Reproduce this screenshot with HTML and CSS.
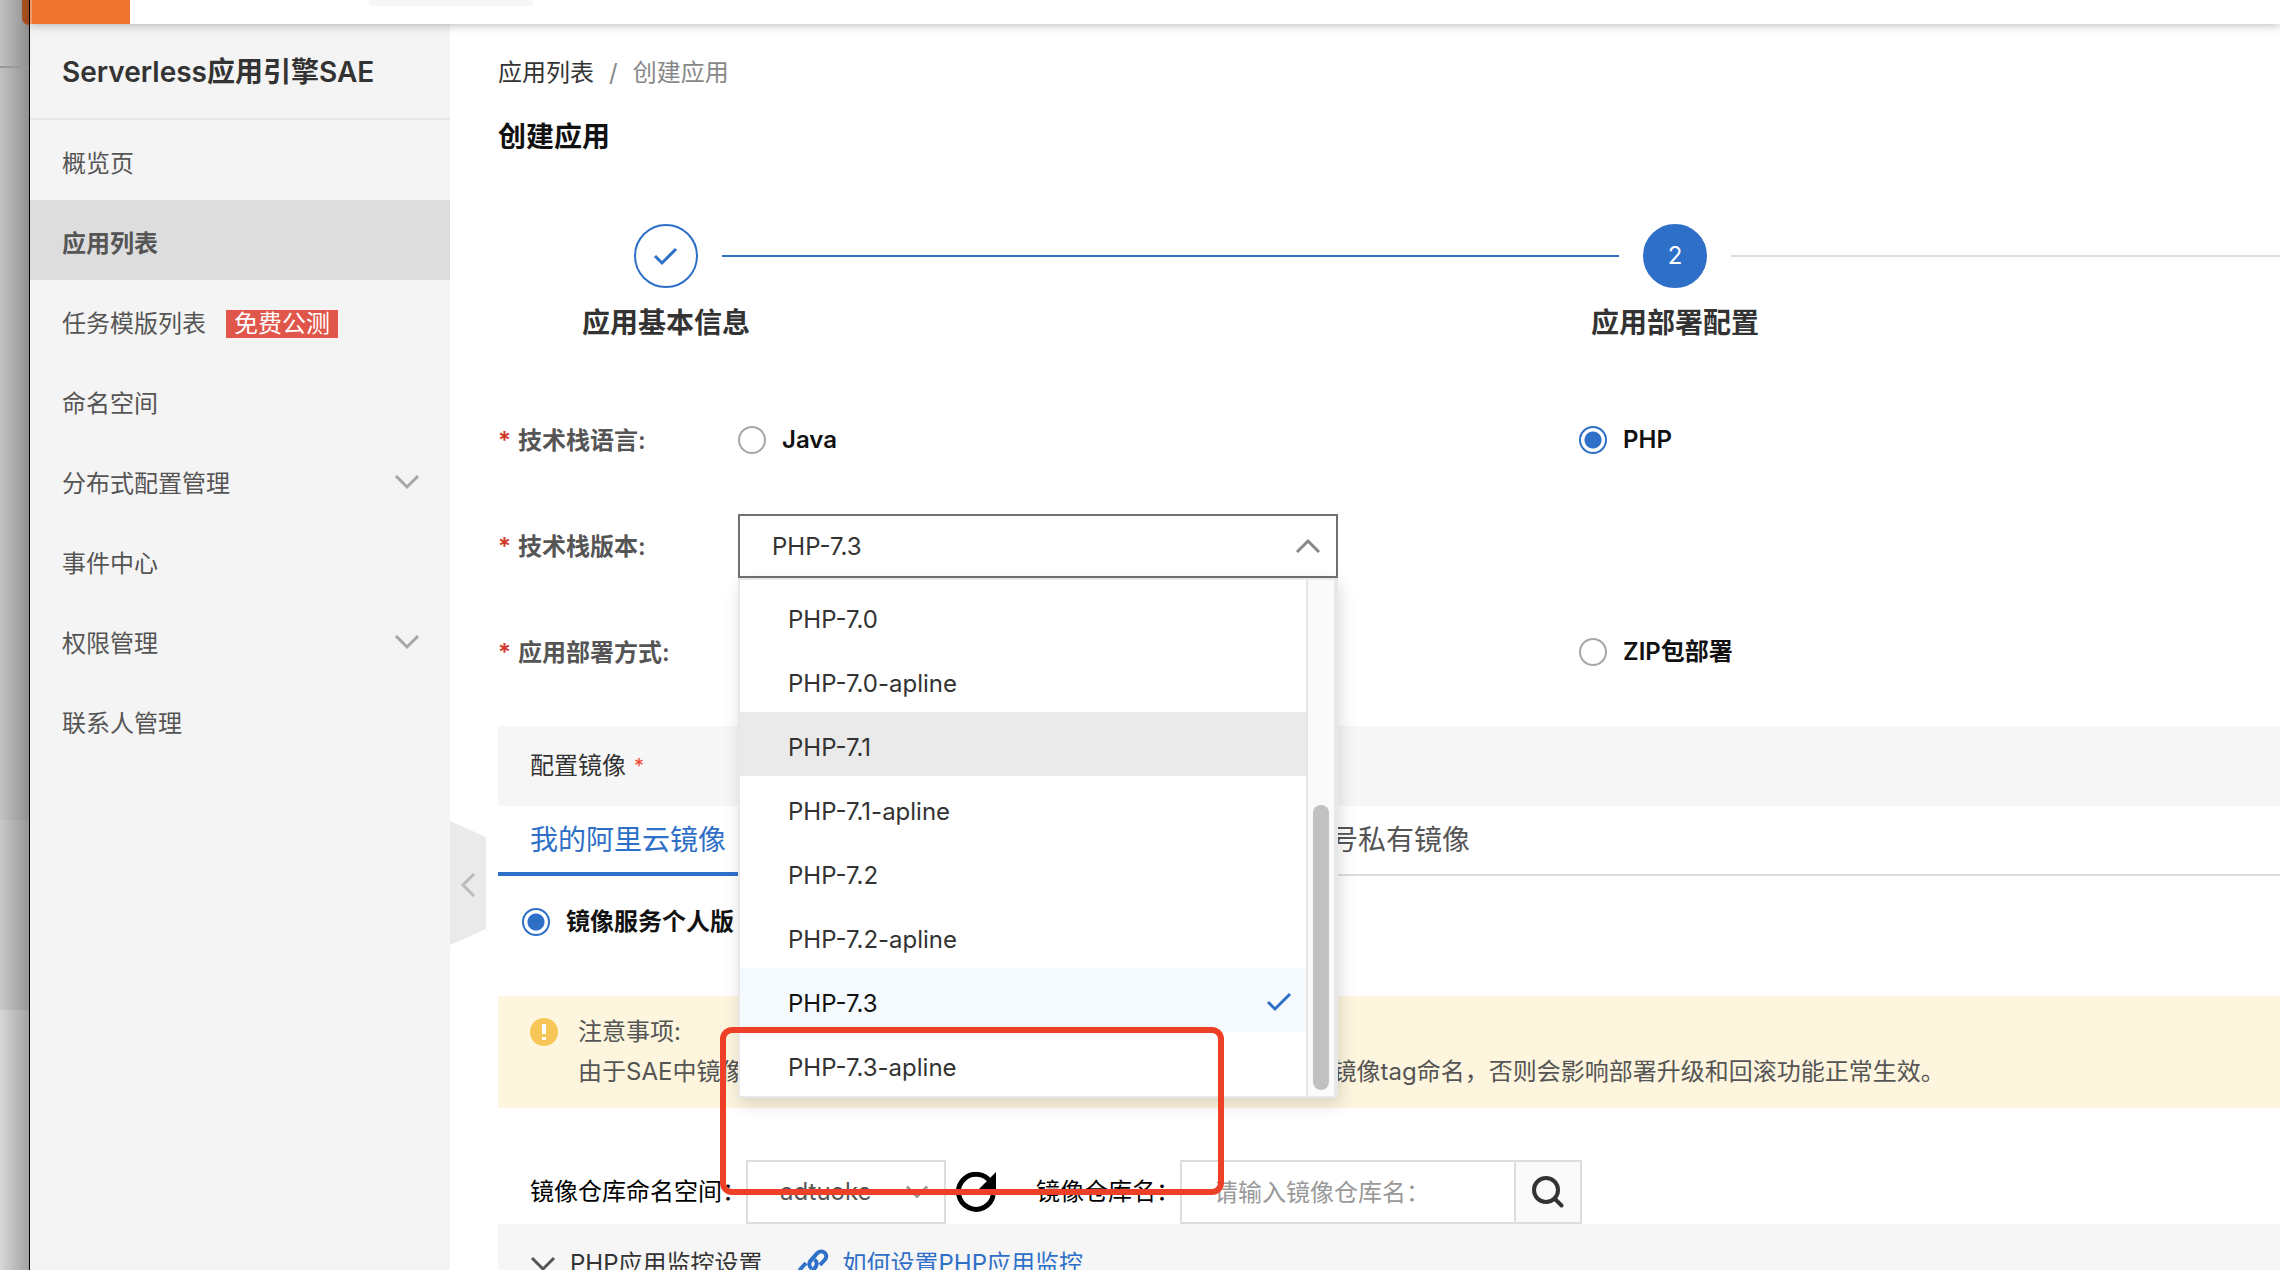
FILE: index.html
```html
<!DOCTYPE html>
<html lang="zh-CN">
<head>
<meta charset="utf-8">
<title>创建应用</title>
<link rel="stylesheet" href="styles.css">
</head>
<body>
<div class="desktop">
  <div class="backdrop">
    <div class="backdrop-top"><span class="backdrop-logo"></span></div>
    <div class="backdrop-mid"></div>
    <div class="backdrop-low"></div>
    <div class="backdrop-end"></div>
  </div>
  <div class="window">
    <header class="topbar">
      <span class="menu-logo"></span>
      <span class="top-pill"></span>
    </header>
    <div class="body">
      <nav class="sidebar">
        <h2 class="product">Serverless应用引擎SAE</h2>
        <ul class="menu">
          <li><a class="menu-item" href="#">概览页</a></li>
          <li><a class="menu-item current" href="#">应用列表</a></li>
          <li><a class="menu-item" href="#">任务模版列表<span class="tag">免费公测</span></a></li>
          <li><a class="menu-item" href="#">命名空间</a></li>
          <li><a class="menu-item" href="#">分布式配置管理<svg class="fold" viewBox="0 0 26 16"><path d="M2 2l11 11L24 2"/></svg></a></li>
          <li><a class="menu-item" href="#">事件中心</a></li>
          <li><a class="menu-item" href="#">权限管理<svg class="fold" viewBox="0 0 26 16"><path d="M2 2l11 11L24 2"/></svg></a></li>
          <li><a class="menu-item" href="#">联系人管理</a></li>
        </ul>
      </nav>
      <main class="main">
        <button class="collapse" type="button" aria-label="收起"><svg width="16" height="26" viewBox="0 0 16 26"><path d="M14 2L3 13l11 11"/></svg></button>
        <div class="breadcrumb"><a href="#">应用列表</a><span class="slash">/</span><span>创建应用</span></div>
        <h1 class="title">创建应用</h1>

        <div class="steps">
          <span class="dot done"><svg width="26" height="20" viewBox="0 0 26 20"><path d="M2 10l7 7L23 3"/></svg></span>
          <span class="line active"></span>
          <span class="dot now">2</span>
          <span class="line"></span>
          <span class="step-label first">应用基本信息</span>
          <span class="step-label second">应用部署配置</span>
        </div>

        <form class="form">
          <div class="row">
            <span class="label"><b class="star">*</b>技术栈语言:</span>
            <div class="choices">
              <label class="choice"><input type="radio" name="lang">Java</label>
              <label class="choice"><input type="radio" name="lang" checked>PHP</label>
            </div>
          </div>
          <div class="row">
            <label class="label" for="version"><b class="star">*</b>技术栈版本:</label>
            <div class="version">
              <select class="version-select" id="version"><option>PHP-7.3</option></select>
              <svg class="caret" viewBox="0 0 26 16"><path d="M2 14L13 3l11 11"/></svg>
              <div class="dropdown">
                <ul class="options" role="listbox">
                  <li class="option" role="option">PHP-7.0</li>
                  <li class="option" role="option">PHP-7.0-apline</li>
                  <li class="option hover" role="option">PHP-7.1</li>
                  <li class="option" role="option">PHP-7.1-apline</li>
                  <li class="option" role="option">PHP-7.2</li>
                  <li class="option" role="option">PHP-7.2-apline</li>
                  <li class="option selected" role="option" aria-selected="true">PHP-7.3<svg width="26" height="20" viewBox="0 0 26 20"><path d="M2 10l7 7L24 2"/></svg></li>
                  <li class="option" role="option">PHP-7.3-apline</li>
                </ul>
                <div class="track"><span class="thumb"></span></div>
              </div>
            </div>
          </div>
          <div class="row">
            <span class="label"><b class="star">*</b>应用部署方式:</span>
            <div class="choices">
              <label class="choice"><input type="radio" name="deploy" checked>镜像</label>
              <label class="choice"><input type="radio" name="deploy">ZIP包部署</label>
            </div>
          </div>
        </form>

        <section class="image-config">
          <h3 class="section-head">配置镜像<span class="mini-star">*</span></h3>
          <div class="tabs">
            <button class="tab on" type="button">我的阿里云镜像</button>
            <button class="tab other" type="button">其他阿里云账号私有镜像</button>
          </div>
          <div class="edition">
            <label class="choice"><input type="radio" name="edition" checked>镜像服务个人版</label>
          </div>
          <div class="notice">
            <svg width="28" height="28" viewBox="0 0 28 28"><circle cx="14" cy="14" r="14" fill="#f6c659"/><path d="M12 6h4v10h-4zM12 19h4v3h-4z" fill="#fff"/></svg>
            <div class="notice-text">
              <p>注意事项:</p>
              <p>由于SAE中镜像版本管理依赖镜像仓库中的tag标识，请务必使用不同的镜像tag命名，否则会影响部署升级和回滚功能正常生效。</p>
            </div>
          </div>
          <div class="filter">
            <label for="space">镜像仓库命名空间：</label>
            <div class="space">
              <select class="space-select" id="space"><option>adtuoke</option></select>
              <svg class="space-caret" viewBox="0 0 26 16"><path d="M2 2l11 11L24 2"/></svg>
            </div>
            <button class="refresh" type="button" aria-label="刷新"><svg width="40" height="40" viewBox="0 0 40 40"><path d="M34.500 10A17.500 17.500 0 1 0 37.200 23" fill="none" stroke="#000" stroke-width="5"/><path d="M40 0v18H22z"/></svg></button>
            <label for="repo">镜像仓库名：</label>
            <input class="repo" id="repo" type="text" placeholder="请输入镜像仓库名：">
            <button class="search" type="button" aria-label="搜索"><svg width="34" height="34" viewBox="0 0 34 34"><circle cx="15" cy="15" r="12"/><path d="M23.500 23.500l7 7"/></svg></button>
          </div>
        </section>
        <section class="monitor">
          <svg class="monitor-caret" viewBox="0 0 26 16"><path d="M2 2l11 11L24 2"/></svg>
          <span>PHP应用监控设置</span>
          <a class="help" href="#"><svg width="32" height="32" viewBox="0 0 32 32"><path d="M14.500 20.500c-3-2.500-3-6 0-9l6-6.500c5-4.500 11.500 1.500 7.500 6.500l-5 5.500"/><path d="M17.500 11.500c3 2.500 3 6 0 9l-6 6.500c-5 4.500-11.500-1.500-7.500-6.500l5-5.500"/></svg>如何设置PHP应用监控</a>
        </section>
        <span class="mark"></span>
      </main>
    </div>
  </div>
</div>
</body>
</html>
```
FILE: styles.css
```css
* { box-sizing: border-box; }

body {
  margin: 0;
  height: 100vh;
  overflow: hidden;
  color: #333;
  background: #fff;
  font: 24px/32px Inter, "Noto Sans CJK SC", sans-serif;
}

a { color: inherit; text-decoration: none; }
ul { list-style: none; margin: 0; padding: 0; }
p, h1, h2, h3 { margin: 0; }
button, input, select { font: inherit; color: inherit; margin: 0; }
path, circle { stroke-linecap: butt; }

.desktop { display: flex; min-height: 100vh; }

/* Strip of the window behind, shaded by the front window */
.backdrop {
  flex: none;
  width: 30px;
  display: flex;
  flex-direction: column;
  border-right: 1px solid #000;
}
.backdrop-top { height: 68px; border-bottom: 2px solid #999; background: linear-gradient(90deg, #c2c2c2, #8f8f8f); }
.backdrop-logo { display: block; width: 7px; height: 25px; margin-left: auto; background: #a8501f; border-radius: 0 0 0 7px; }
.backdrop-mid { height: 752px; background: linear-gradient(90deg, #c2c2c2, #929292); }
.backdrop-low { height: 190px; background: linear-gradient(90deg, #c9c9c9, #989898); }
.backdrop-end { flex: 1; background: linear-gradient(90deg, #d8d8d8, #a2a2a2); }

.window { flex: 1; min-width: 0; display: flex; flex-direction: column; }

.topbar {
  position: relative;
  z-index: 2;
  display: flex;
  align-items: flex-start;
  height: 24px;
  background: #fff;
  box-shadow: 0 2px 8px rgba(0, 0, 0, .24);
}
.menu-logo { width: 100px; height: 24px; margin-right: 239px; background: #f07430; border-left: 2px solid #f39a6b; }
.top-pill { width: 164px; height: 6px; background: #f5f6f8; border-radius: 0 0 4px 4px; }

.body { flex: 1; display: flex; }

.sidebar { flex: none; width: 420px; background: #f4f4f4; }
.product { padding: 28px 32px 26px; font-size: 28px; line-height: 40px; font-weight: 600; border-bottom: 2px solid #e9e9e9; }
.menu-item { display: flex; align-items: center; height: 80px; padding: 8px 30px 0 32px; color: #555; }
.menu-item.current { background: #ddd; font-weight: 600; }
.tag { margin-left: 20px; padding: 0 8px; line-height: 28px; color: #fff; background: #e1564a; }
.fold { width: 26px; height: 16px; margin: 0 0 4px auto; fill: none; stroke: #a6a6a6; stroke-width: 3; }

.main { position: relative; flex: 1; min-width: 0; padding: 33px 0 0 48px; }

.collapse {
  position: absolute;
  left: 0;
  top: 797px;
  width: 36px;
  height: 124px;
  padding: 12px 0 0 0;
  border: 0;
  background: #eaeaea;
  clip-path: polygon(0 0, 100% 16px, 100% 108px, 0 100%);
}
.collapse svg { fill: none; stroke: #bbb; stroke-width: 3; }

.breadcrumb { color: #888; }
.breadcrumb a { color: #333; }
.slash { margin: 0 15px; }
.title { margin-top: 28px; font-size: 28px; line-height: 40px; font-weight: 600; color: #111; }

.steps {
  display: grid;
  grid-template-columns: 64px 897fr 64px 549fr;
  column-gap: 24px;
  row-gap: 15px;
  align-items: center;
  margin-top: 67px;
  padding-left: 136px;
}
.dot { display: flex; align-items: center; justify-content: center; height: 64px; border: 2px solid #2e6fc8; border-radius: 50%; }
.dot svg { fill: none; stroke: #2e6fc8; stroke-width: 3; }
.dot.now { color: #fff; background: #2e6fc8; }
.line { height: 2px; background: #ddd; }
.line.active { background: #2e6fc8; }
.step-label { justify-self: center; white-space: nowrap; font-size: 28px; line-height: 40px; font-weight: 600; }
.step-label.first { grid-column: 1; }
.step-label.second { grid-column: 3; }

.form { display: flex; flex-direction: column; gap: 42px; margin-top: 65px; }
.row { display: flex; align-items: center; height: 64px; }
.label { flex: none; width: 240px; padding-top: 2px; color: #555; font-weight: 600; }
.star { display: inline-block; width: 20px; color: #d03a2b; font-weight: 600; }
.choices { flex: 1; display: grid; grid-template-columns: 841fr 701fr; }
.choice { display: flex; align-items: center; gap: 16px; color: #111; font-weight: 600; }
.choice input {
  appearance: none;
  width: 28px;
  height: 28px;
  border: 2px solid #a6a6a6;
  border-radius: 50%;
  background: #fff;
}
.choice input:checked { border-color: #2e6fc8; background: radial-gradient(circle, #2e6fc8 8px, #fff 9px); }

.version { position: relative; width: 600px; height: 64px; }
.version-select {
  appearance: none;
  width: 100%;
  height: 64px;
  padding: 2px 32px 0;
  border: 2px solid #707070;
  border-radius: 0;
  background: #fff;
}
.caret { position: absolute; right: 17px; top: 24px; width: 26px; height: 16px; fill: none; stroke: #888; stroke-width: 3; }
.dropdown {
  position: absolute;
  z-index: 3;
  left: 0;
  top: 64px;
  width: 100%;
  display: flex;
  border: 2px solid #e8e8e8;
  border-right-width: 4px;
  background: #fff;
  box-shadow: 2px 6px 16px rgba(0, 0, 0, .14);
}
.options { flex: 1; padding-top: 4px; border-right: 2px solid #e6e6e6; }
.option { display: flex; align-items: center; justify-content: space-between; height: 64px; padding: 8px 14px 0 48px; }
.option.hover { background: #eaeaea; }
.option.selected { color: #111; background: #f5faff; }
.option svg { margin-bottom: 4px; fill: none; stroke: #2e6fc8; stroke-width: 3; }
.track { display: flex; align-items: flex-end; justify-content: center; width: 26px; padding: 6px 0; background: #fafafa; }
.thumb { width: 16px; height: 285px; border-radius: 8px; background: #c1c1c1; }

.image-config { margin-top: 42px; }
.section-head { display: flex; align-items: center; height: 80px; padding: 0 32px; font-size: 24px; font-weight: 400; background: #f6f6f6; }
.mini-star { margin-left: 8px; font-size: 20px; color: #f04631; }
.tabs { display: flex; height: 70px; box-shadow: inset 0 -2px #ddd; }
.tab { padding: 2px 32px 0; border: 0; border-bottom: 4px solid transparent; background: none; color: #555; font-size: 28px; line-height: 64px; white-space: nowrap; }
.tab.on { color: #2e6fc8; border-color: #2e6fc8; }
.tab.other { margin-left: 372px; }
.edition { display: flex; align-items: center; height: 92px; padding-left: 24px; }

.notice { display: flex; gap: 20px; margin-top: 28px; padding: 16px 32px; color: #555; background: #fdf5de; }
.notice svg { margin-top: 6px; }
.notice-text { line-height: 40px; white-space: nowrap; }

.filter { display: flex; align-items: center; margin-top: 52px; padding-left: 32px; color: #000; }
.space { position: relative; width: 200px; }
.space-select { display: block; appearance: none; width: 100%; height: 64px; padding: 0 32px; border: 2px solid #ddd; border-radius: 0; color: #555; background: #fff; }
.space-caret { position: absolute; right: 17px; top: 24px; width: 24px; height: 16px; fill: none; stroke: #999; stroke-width: 3; }
.refresh { display: flex; margin: 0 40px 0 10px; padding: 0; border: 0; background: none; }
.repo { width: 336px; height: 64px; padding: 0 32px; border: 2px solid #ddd; border-radius: 0; }
.repo::placeholder { color: #999; opacity: 1; }
.search { display: flex; align-items: center; justify-content: center; width: 66px; height: 64px; padding: 0; border: 2px solid #ddd; border-left: 0; background: #fafafa; }
.search svg { fill: none; stroke: #333; stroke-width: 4; }
.search path { stroke-linecap: round; }

.monitor { display: flex; align-items: center; height: 80px; padding: 0 32px; background: #f6f6f6; }
.monitor-caret { width: 26px; height: 16px; margin-right: 14px; fill: none; stroke: #555; stroke-width: 3; }
.help { display: flex; align-items: center; gap: 14px; margin-left: 34px; color: #2e6fc8; }
.help svg { fill: none; stroke: #2e6fc8; stroke-width: 4; }

/* Red annotation frame drawn over the page */
.mark {
  position: absolute;
  z-index: 4;
  left: 270px;
  top: 1003px;
  width: 504px;
  height: 168px;
  border: 6px solid #ee4026;
  border-radius: 12px;
}
```
